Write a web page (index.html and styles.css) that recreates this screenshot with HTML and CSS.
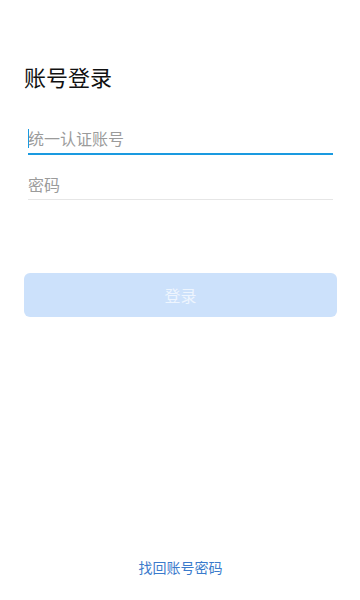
FILE: index.html
```html
<!DOCTYPE html>
<html lang="zh">
<head>
<meta charset="utf-8">
<link rel="stylesheet" href="styles.css">
</head>
<body>
<div class="page">
  <h1 class="title">账号登录</h1>
  <div class="fields">
    <div class="field field-active">
      <span class="caret"></span>
      <input class="input input-first" type="text" placeholder="统一认证账号">
    </div>
    <div class="field">
      <input class="input input-second" type="password" placeholder="密码">
    </div>
  </div>
  <button class="btn" type="button">登录</button>
  <div class="spacer"></div>
  <a class="link" href="#">找回账号密码</a>
</div>
</body>
</html>
```
FILE: styles.css
```css
html, body {
  margin: 0;
  padding: 0;
  background: #ffffff;
}
body {
  font-family: "Noto Sans CJK SC", "Noto Sans", sans-serif;
}
.page {
  box-sizing: border-box;
  height: 600px;
  display: flex;
  flex-direction: column;
  padding: 0 23px 0 24px;
}
.title {
  margin: 60px 0 0 0;
  font-size: 22px;
  line-height: 32px;
  font-weight: 400;
  color: #111111;
}
.fields {
  margin: 26px 4px 0 4px;
  display: flex;
  flex-direction: column;
  gap: 12px;
}
.field {
  position: relative;
  border-bottom: 1px solid #e6e6e6;
}
.field-active {
  border-bottom: 2px solid #1a9ae0;
}
.input {
  display: block;
  width: 100%;
  box-sizing: border-box;
  border: 0;
  outline: none;
  margin: 0;
  font-family: "Noto Sans CJK SC", "Noto Sans", sans-serif;
  font-size: 16px;
  color: #333333;
  background: transparent;
}
.input-first {
  height: 35px;
  padding: 5px 0 0 0;
}
.input-second {
  height: 32px;
  padding: 2px 0 0 0;
}
.input::placeholder {
  color: #9b9b9b;
}
.caret {
  position: absolute;
  left: 0;
  top: 11px;
  width: 1px;
  height: 19px;
  background: #1a9ae0;
}
.btn {
  margin-top: 73px;
  height: 44px;
  border: 0;
  border-radius: 6px;
  background: #cce1fb;
  color: #eef5fe;
  font-family: "Noto Sans CJK SC", "Noto Sans", sans-serif;
  font-size: 16px;
  padding: 0;
}
.spacer {
  flex: 1;
}
.link {
  align-self: center;
  margin-bottom: 23px;
  font-size: 14px;
  line-height: 20px;
  color: #3b7bcc;
  text-decoration: none;
}
```
